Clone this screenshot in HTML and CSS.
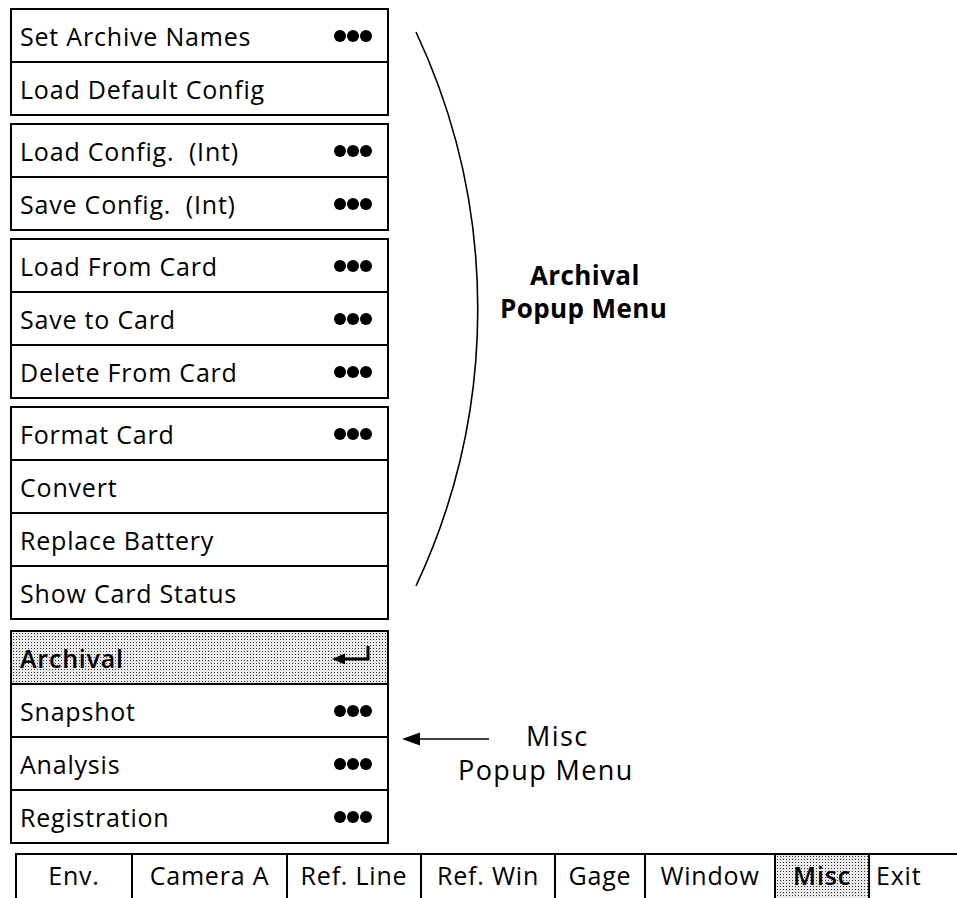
FILE: index.html
```html
<!DOCTYPE html>
<html lang="en">
<head>
    <meta charset="UTF-8">
    <title>Archival Popup Menu</title>
    <link rel="stylesheet" href="styles.css">
</head>
<body>
  <div class="screen">
    <div class="menus">
      <div class="group">
        <div class="item">Set Archive Names <span class="more"><i></i><i></i><i></i></span></div>
        <div class="item">Load Default Config</div>
      </div>
      <div class="group">
        <div class="item">Load Config.&nbsp;&nbsp;(Int) <span class="more"><i></i><i></i><i></i></span></div>
        <div class="item">Save Config.&nbsp;&nbsp;(Int) <span class="more"><i></i><i></i><i></i></span></div>
      </div>
      <div class="group">
        <div class="item">Load From Card <span class="more"><i></i><i></i><i></i></span></div>
        <div class="item">Save to Card <span class="more"><i></i><i></i><i></i></span></div>
        <div class="item">Delete From Card <span class="more"><i></i><i></i><i></i></span></div>
      </div>
      <div class="group">
        <div class="item">Format Card <span class="more"><i></i><i></i><i></i></span></div>
        <div class="item">Convert</div>
        <div class="item">Replace Battery</div>
        <div class="item">Show Card Status</div>
      </div>
      <div class="group misc">
        <div class="item active">Archival
          <svg class="enter" width="40" height="20" viewBox="0 0 40 20">
            <path d="M10 15 H36 V2" fill="none" stroke="#000" stroke-width="3"/>
            <path d="M0 15 L13 9.5 L13 20.5 Z"/>
          </svg>
        </div>
        <div class="item">Snapshot <span class="more"><i></i><i></i><i></i></span></div>
        <div class="item">Analysis <span class="more"><i></i><i></i><i></i></span></div>
        <div class="item">Registration <span class="more"><i></i><i></i><i></i></span></div>
      </div>
    </div>

    <div class="notes">
      <div class="archival-note">
        <svg class="arc" width="66" height="558" viewBox="0 0 66 558">
          <path d="M2 2 A652 652 0 0 1 2 556" fill="none" stroke="#000" stroke-width="1.6"/>
        </svg>
        <div class="label bold">
          <div class="first">Archival</div>
          <div>Popup Menu</div>
        </div>
      </div>
      <div class="misc-note">
        <div class="line">
          <svg class="arrow" width="88" height="16" viewBox="0 0 88 16">
            <path d="M10 8 H87" stroke="#000" stroke-width="1.6"/>
            <path d="M0 8 L18 1.5 L18 14.5 Z"/>
          </svg>
          <span>Misc</span>
        </div>
        <div class="line second">Popup Menu</div>
      </div>
    </div>
  </div>

  <div class="softkeys">
    <div class="key env">Env.</div>
    <div class="key cam">Camera A</div>
    <div class="key ref">Ref. Line</div>
    <div class="key ref">Ref. Win</div>
    <div class="key gage">Gage</div>
    <div class="key win">Window</div>
    <div class="key active">Misc</div>
    <div class="key exit">Exit</div>
  </div>
</body>
</html>
```

FILE: styles.css
```css
html, body { margin: 0; padding: 0; overflow: hidden; }
body { font-family: "Open Sans", "Noto Sans", sans-serif; font-size: 25px; letter-spacing: 0.8px; color: #000; background: #fff; width: 957px; height: 898px; }

.screen { display: flex; padding: 8px 0 0 10px; }
.menus { width: 379px; display: flex; flex-direction: column; gap: 7px; }
.group { border: 2px solid #000; }
.group.misc { margin-top: 3px; }
.item { height: 51px; display: flex; align-items: center; justify-content: space-between; padding: 0 15px 0 8px; }
.item + .item { border-top: 2px solid #000; }
.more { display: flex; gap: 1px; }
.more i { width: 12px; height: 12px; border-radius: 50%; background: #000; }
.active {
  font-weight: 600;
  background-color: #eaeaea;
  background-image: radial-gradient(circle, #333 0.7px, transparent 1px);
  background-size: 3px 3px;
}
.enter { margin-top: -8px; }

.notes { display: flex; flex-direction: column; }
.archival-note { display: flex; align-items: center; margin: 22px 0 0 25px; }
.label.bold { font-weight: 700; font-size: 26px; line-height: 33px; margin: 0 0 34px 20px; letter-spacing: 0.4px; }
.label .first { padding-left: 30px; }
.misc-note { margin: 131px 0 0 13px; font-size: 27px; line-height: 34px; letter-spacing: 1.4px; }
.misc-note .line { display: flex; align-items: center; gap: 36px; height: 34px; }
.misc-note .line .arrow { margin-top: 6px; }
.misc-note .second { padding-left: 56px; }

.softkeys { display: flex; margin: 9px 0 0 15px; border-left: 2px solid #000; border-top: 2px solid #000; height: 43px; }
.key { border-right: 2px solid #000; box-sizing: border-box; text-align: center; padding-top: 3px; }
.key.env { width: 116px; }
.key.cam { width: 155px; }
.key.ref { width: 134px; }
.key.gage { width: 90px; }
.key.win { width: 130px; }
.key.active { width: 94px; }
.key.exit { flex: 1; text-align: left; padding-left: 6px; border-right: none; }
```
